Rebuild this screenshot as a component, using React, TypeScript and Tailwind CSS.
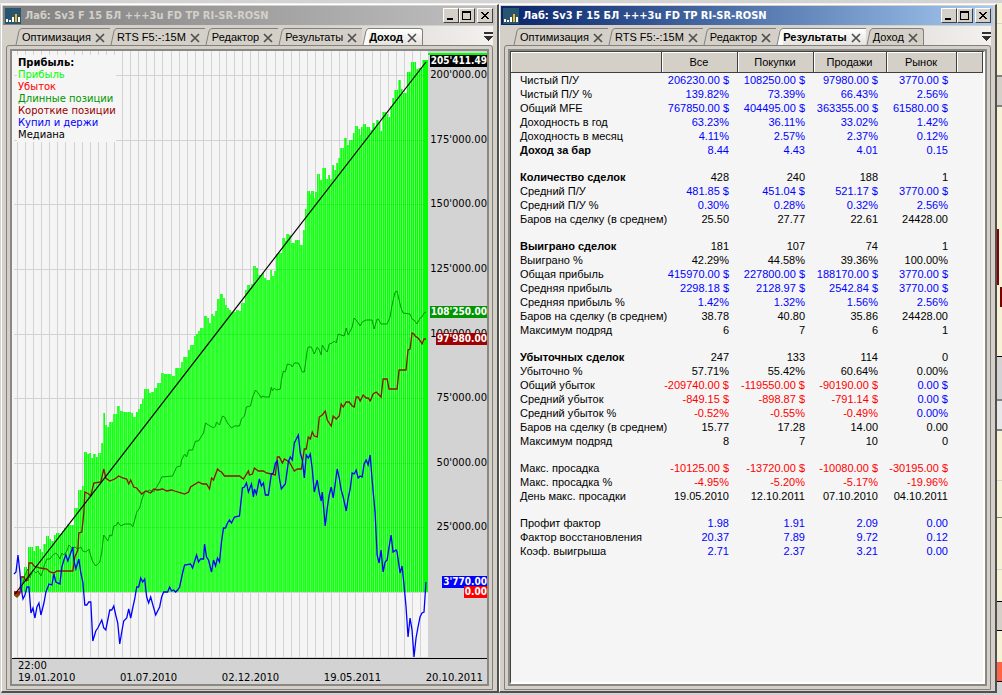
import { useState } from "react";
import { clsx } from "clsx";

const TABS = ["Оптимизация", "RTS F5:-:15M", "Редактор", "Результаты", "Доход"];

const ACCOUNT_TITLE = "Лаб: Sv3 F 15 БЛ +++3u FD TP RI-SR-ROSN";

const LEGEND = [
    { label: "Прибыль", color: "text-[#00ff00]" },
    { label: "Убыток", color: "text-[#ff0000]" },
    { label: "Длинные позиции", color: "text-[#009600]" },
    { label: "Короткие позиции", color: "text-[#960000]" },
    { label: "Купил и держи", color: "text-[#0000ff]" },
    { label: "Медиана", color: "text-black" },
];

const SCALE = [200000, 175000, 150000, 125000, 100000, 75000, 50000, 25000];

const MARKERS = [
    { value: 205411.49, label: "205'411.49", color: "bg-black" },
    { value: 108250, label: "108'250.00", color: "bg-[#009600]" },
    { value: 97980, label: "97'980.00", color: "bg-[#a00000]" },
    { value: 3770, label: "3'770.00", color: "bg-[#0000ff]" },
    { value: 0, label: "0.00", color: "bg-[#ff0000]" },
];

const DATES = ["19.01.2010", "01.07.2010", "02.12.2010", "19.05.2011", "20.10.2011"];

// Plot box: money runs along y, ZERO_Y is the zero level
const PLOT = { x: 12, y: 51, width: 417, height: 607 };
const ZERO_Y = 592;
const toY = (value: number) => ZERO_Y - value * 0.002585;
const toPercent = (value: number) => `${((toY(value) - PLOT.y) / PLOT.height) * 100}%`;

// Left edge and top of every group of equity bars
const EQUITY =
    "21,576 24,567 27,572 28,547 33,551 35,546 39,549 41,552 43,544 46,536 49,539 51,541 54,535 56,533 60,534 62,531 64,528 67,524 69,525 74,508 78,490 82,486 84,452 87,454 89,453 91,458 93,454 96,457 98,453 101,443 103,413 105,425 107,427 109,422 113,414 117,406 120,411 123,412 131,413 133,417 136,412 138,409 140,404 142,399 144,389 149,393 151,392 154,388 157,383 161,373 164,374 172,376 175,368 181,362 183,357 188,350 190,345 194,336 196,334 198,331 200,328 204,316 207,318 209,323 211,314 213,316 215,311 217,299 220,305 221,294 224,298 226,305 228,308 230,310 232,312 237,310 240,311 242,303 246,290 248,285 251,288 252,284 254,266 257,268 259,275 263,273 265,278 267,280 271,270 273,276 275,271 277,254 279,253 283,238 286,241 287,234 290,235 292,243 296,240 301,245 304,230 306,209 308,191 311,194 312,191 315,198 316,192 318,174 321,180 323,168 327,179 329,175 331,179 333,165 335,170 337,163 339,158 341,148 345,138 348,145 350,140 354,133 356,126 359,129 361,135 362,127 364,124 367,127 371,130 373,123 376,128 377,120 380,122 381,131 383,112 387,114 389,117 391,106 393,98 395,90 399,80 402,89 404,93 408,72 412,62 417,69 419,68 423,60";

const LONG =
    "14,595 17,597 20,592 22,587 25,575 28,569 30,578 33,570 36,573 38,571 41,576 43,571 44,566 47,559 50,559 53,555 56,553 58,555 60,559 62,553 64,555 67,551 69,545 72,548 75,547 78,549 81,547 83,551 86,552 89,549 91,556 93,562 96,566 100,562 102,552 104,535 106,538 108,541 110,535 112,536 114,526 117,525 118,522 121,526 125,524 131,524 133,527 135,520 137,512 140,508 142,500 145,492 150,490 154,492 157,487 160,482 162,477 173,476 177,467 181,466 182,460 185,454 187,457 189,450 193,450 196,441 199,441 202,436 204,433 206,423 209,425 214,428 216,426 217,422 220,425 223,416 225,417 228,423 232,428 235,426 240,426 242,419 245,416 247,407 251,406 253,398 256,390 258,392 262,398 263,396 266,397 270,397 272,387 273,391 275,388 277,390 281,389 282,380 284,371 286,372 288,364 292,365 293,367 295,363 299,363 301,367 303,372 305,372 308,350 309,347 312,347 315,354 318,347 320,350 322,355 323,345 326,350 328,352 330,344 333,343 335,341 337,343 339,334 345,336 347,328 349,335 353,327 355,318 357,320 361,326 363,322 367,320 373,320 375,329 378,319 379,319 382,324 388,324 391,317 393,305 396,292 398,291 400,300 402,308 404,313 411,314 413,319 415,320 418,324 421,318 423,317 425,313 427,312";

const SHORT =
    "14,593 20,593 21,577 24,577 26,581 28,580 29,563 32,563 34,566 37,567 40,568 47,569 50,572 54,573 57,571 73,571 75,557 78,550 79,533 82,532 84,513 85,492 89,494 91,496 94,483 101,482 104,469 106,478 110,481 115,479 119,476 123,478 127,479 129,484 131,480 134,487 137,488 142,494 146,491 151,493 154,489 158,490 163,489 167,491 172,490 175,491 182,493 185,494 189,492 191,487 199,482 203,484 207,484 210,489 212,478 214,480 218,469 220,471 222,472 225,476 240,476 244,479 249,471 250,475 253,474 255,468 259,471 264,471 267,473 272,474 276,475 278,457 280,457 283,463 285,459 290,462 295,471 298,469 302,469 303,463 305,449 307,449 309,437 311,439 313,432 315,436 318,437 320,417 323,415 326,411 328,420 332,426 334,416 337,419 340,416 342,404 344,407 347,402 350,402 353,406 355,407 357,397 359,397 361,401 364,395 367,398 369,398 371,401 374,394 377,392 379,394 382,397 384,379 388,379 390,389 398,389 400,370 407,370 409,350 411,349 413,333 415,334 416,336 419,338 422,342 423,344 425,339 427,339";

const HOLD =
    "14,574 16,572 18,555 20,573 21,587 23,599 25,595 27,587 29,587 31,613 33,608 35,618 37,607 39,603 41,615 44,603 46,592 48,587 49,584 52,585 54,574 56,582 60,584 62,567 64,560 66,555 68,561 73,547 74,560 76,569 79,559 81,573 83,582 85,605 87,605 89,602 91,602 93,641 96,631 98,628 102,620 104,628 106,630 110,610 112,610 114,606 116,615 118,623 120,644 122,632 124,621 127,618 129,609 131,618 133,608 135,599 137,587 139,587 141,578 143,582 145,579 147,597 149,603 151,597 156,615 160,607 162,597 164,592 168,592 170,587 172,591 174,590 176,592 178,590 180,587 183,573 185,565 191,564 193,568 197,555 199,562 201,559 204,559 205,544 207,557 209,560 212,572 214,560 216,566 218,558 220,562 222,542 224,528 226,528 228,523 230,520 232,523 235,517 240,516 243,488 245,487 247,483 249,492 252,484 254,497 255,489 257,494 260,479 262,486 264,483 266,495 269,495 272,474 274,473 276,463 278,461 280,478 282,489 285,485 286,484 289,462 291,457 293,460 295,443 297,439 299,435 301,453 303,460 305,478 307,455 309,458 311,454 313,469 315,492 318,480 320,493 322,501 323,492 326,526 328,508 330,495 332,487 334,498 338,469 340,478 342,490 344,497 347,511 349,498 351,489 353,473 355,474 357,470 359,478 361,476 363,477 365,464 367,460 369,465 371,455 373,480 376,513 378,555 380,563 382,550 384,572 386,562 388,560 390,547 392,535 394,552 397,550 398,552 401,573 403,566 405,585 407,607 409,637 411,618 413,630 415,657 417,638 419,627 421,617 423,613 425,612 426,597 427,582";

const equityPath =
    "M21 592" +
    EQUITY.split(" ")
        .map((point) => {
            const [x, y] = point.split(",");
            return `H${x}V${y}`;
        })
        .join("") +
    "H429V592Z";

type Tone = "blue" | "red" | "black";
type Row = { label: string; values: string[]; tone?: Tone; bold?: boolean };

// null is an empty line between groups
const ROWS: (Row | null)[] = [
    { label: "Чистый П/У", values: ["206230.00 $", "108250.00 $", "97980.00 $", "3770.00 $"], tone: "blue" },
    { label: "Чистый П/У %", values: ["139.82%", "73.39%", "66.43%", "2.56%"], tone: "blue" },
    { label: "Общий MFE", values: ["767850.00 $", "404495.00 $", "363355.00 $", "61580.00 $"], tone: "blue" },
    { label: "Доходность в год", values: ["63.23%", "36.11%", "33.02%", "1.42%"], tone: "blue" },
    { label: "Доходность в месяц", values: ["4.11%", "2.57%", "2.37%", "0.12%"], tone: "blue" },
    { label: "Доход за бар", values: ["8.44", "4.43", "4.01", "0.15"], tone: "blue", bold: true },
    null,
    { label: "Количество сделок", values: ["428", "240", "188", "1"], bold: true },
    { label: "Средний П/У", values: ["481.85 $", "451.04 $", "521.17 $", "3770.00 $"], tone: "blue" },
    { label: "Средний П/У %", values: ["0.30%", "0.28%", "0.32%", "2.56%"], tone: "blue" },
    { label: "Баров на сделку (в среднем)", values: ["25.50", "27.77", "22.61", "24428.00"] },
    null,
    { label: "Выиграно сделок", values: ["181", "107", "74", "1"], bold: true },
    { label: "Выиграно %", values: ["42.29%", "44.58%", "39.36%", "100.00%"] },
    { label: "Общая прибыль", values: ["415970.00 $", "227800.00 $", "188170.00 $", "3770.00 $"], tone: "blue" },
    { label: "Средняя прибыль", values: ["2298.18 $", "2128.97 $", "2542.84 $", "3770.00 $"], tone: "blue" },
    { label: "Средняя прибыль %", values: ["1.42%", "1.32%", "1.56%", "2.56%"], tone: "blue" },
    { label: "Баров на сделку (в среднем)", values: ["38.78", "40.80", "35.86", "24428.00"] },
    { label: "Максимум подряд", values: ["6", "7", "6", "1"] },
    null,
    { label: "Убыточных сделок", values: ["247", "133", "114", "0"], bold: true },
    { label: "Убыточно %", values: ["57.71%", "55.42%", "60.64%", "0.00%"] },
    { label: "Общий убыток", values: ["-209740.00 $", "-119550.00 $", "-90190.00 $", "0.00 $"], tone: "red" },
    { label: "Средний убыток", values: ["-849.15 $", "-898.87 $", "-791.14 $", "0.00 $"], tone: "red" },
    { label: "Средний убыток %", values: ["-0.52%", "-0.55%", "-0.49%", "0.00%"], tone: "red" },
    { label: "Баров на сделку (в среднем)", values: ["15.77", "17.28", "14.00", "0.00"] },
    { label: "Максимум подряд", values: ["8", "7", "10", "0"] },
    null,
    { label: "Макс. просадка", values: ["-10125.00 $", "-13720.00 $", "-10080.00 $", "-30195.00 $"], tone: "red" },
    { label: "Макс. просадка %", values: ["-4.95%", "-5.20%", "-5.17%", "-19.96%"], tone: "red" },
    { label: "День макс. просадки", values: ["19.05.2010", "12.10.2011", "07.10.2010", "04.10.2011"] },
    null,
    { label: "Профит фактор", values: ["1.98", "1.91", "2.09", "0.00"], tone: "blue" },
    { label: "Фактор восстановления", values: ["20.37", "7.89", "9.72", "0.12"], tone: "blue" },
    { label: "Коэф. выигрыша", values: ["2.71", "2.37", "3.21", "0.00"], tone: "blue" },
];

function toneClass(tone: Tone | undefined, value: string) {
    if (tone === "red") return value.startsWith("-") ? "text-[#ff0000]" : "text-[#0000ff]";
    return tone === "blue" ? "text-[#0000ff]" : "text-black";
}

function TitleButton({ label, path, className }: { label: string; path: string; className?: string }) {
    return (
        <button
            type="button"
            aria-label={label}
            className={clsx(
                "flex h-[15px] w-4 items-center justify-center border border-t-white border-l-white border-r-[#404040] border-b-[#404040] bg-[#d4d0c8]",
                className
            )}
        >
            <svg width="12" height="11" viewBox="0 0 12 11" shapeRendering="crispEdges">
                <path d={path} fill="black" />
            </svg>
        </button>
    );
}

function TitleBar({ active }: { active?: boolean }) {
    return (
        <header
            className={clsx(
                "flex h-[19px] shrink-0 items-center bg-linear-to-r pr-[2px] pl-[2px]",
                active ? "from-[#0a246a] to-[#a6caf0]" : "from-[#808080] to-[#c0c0c0]"
            )}
        >
            <svg width="16" height="16" viewBox="0 0 16 16" shapeRendering="crispEdges" className="shrink-0">
                <rect width="16" height="16" fill="#27546f" />
                <path d="M1 11h2v3h-2zM4 12h2v2h-2zM7 9h2v5h-2zM13 9h2v5h-2z" fill="white" />
                <path d="M10 6h2v8h-2z" fill="#f5b91e" />
            </svg>
            <h1
                className={clsx(
                    "ml-1 min-w-0 flex-1 truncate font-['DejaVu_Sans_Condensed','DejaVu_Sans',sans-serif] text-[11px] leading-4 font-bold",
                    active ? "text-white" : "text-[#d4d0c8]"
                )}
            >
                {ACCOUNT_TITLE}
            </h1>
            <TitleButton label="Свернуть" path="M2 8h6v2H2z" />
            <TitleButton label="Развернуть" path="M1 1h9v9H1zM2 3v6h7V3z" />
            <TitleButton
                label="Закрыть"
                className="ml-[2px]"
                path="M2 2h2v1h1v1h2V3h1V2h2v1H9v1H8v1H7v1h1v1h1v1h1v1H8V8H7V7H5v1H4v1H2V8h1V7h1V6h1V5H4V4H3V3H2z"
            />
        </header>
    );
}

function TabStrip({ selected, onSelect }: { selected: string; onSelect: (tab: string) => void }) {
    return (
        <div className="flex h-[19px] items-end bg-linear-to-r from-[#d4d0c8] from-60% to-[#f2f1ef] pl-[9px]">
            {TABS.map((tab, i) => {
                const current = tab === selected;
                return (
                    <div key={tab} className="flex h-[17px]">
                        <svg width="7" height="17" viewBox="0 0 7 17" className="shrink-0">
                            <path d="M1 17L4 3Q5 0.5 7 0.5V17Z" fill={current ? "#fafafa" : "#d4d0c8"} />
                            <path d="M1 17L4 3Q5 0.5 7 0.5" fill="none" stroke="#808080" />
                        </svg>
                        <div
                            className={clsx(
                                "flex items-center border-t border-[#808080]",
                                current ? "bg-linear-to-b from-white to-[#e4e2dd]" : "bg-[#d4d0c8]",
                                i === TABS.length - 1 && "rounded-tr-[3px] border-r"
                            )}
                        >
                            <button
                                type="button"
                                onClick={() => onSelect(tab)}
                                className={clsx("text-[11px] leading-4 whitespace-nowrap", current && "font-bold")}
                            >
                                {tab}
                            </button>
                            <button type="button" aria-label={`Закрыть ${tab}`} className="mr-[5px] ml-1 pt-[2px]">
                                <svg width="10" height="10" viewBox="0 0 10 10">
                                    <path d="M1 1L9 9M9 1L1 9" stroke="#505050" strokeWidth="1.7" />
                                </svg>
                            </button>
                        </div>
                    </div>
                );
            })}
            <button type="button" aria-label="Список вкладок" className="mb-[4px] ml-auto">
                <svg width="9" height="9" viewBox="0 0 9 9" shapeRendering="crispEdges">
                    <path d="M0 0h9v2H0zM0 4h9v1H8v1H7v1H6v1H5v1H4V8H3V7H2V6H1V5H0z" fill="#303030" />
                </svg>
            </button>
        </div>
    );
}

function LabWindow({ active, initialTab, children }: { active?: boolean; initialTab: string; children: React.ReactNode }) {
    const [tab, setTab] = useState(initialTab);

    return (
        <section className="flex min-w-0 flex-1 flex-col border-t border-r-2 border-b-2 border-l border-t-white border-r-[#505050] border-b-[#505050] border-l-white bg-[#d4d0c8] pt-px pr-[2px] pl-px">
            <TitleBar active={active} />
            <div className="flex flex-1 flex-col pt-px pr-[2px] pb-px pl-[3px]">
                <TabStrip selected={tab} onSelect={setTab} />
                <div className="flex flex-1 flex-col rounded-t-[3px] border border-[#808080] p-[3px]">
                    <div className="flex flex-1 flex-col border-2 border-[#8a8884]">{children}</div>
                </div>
            </div>
        </section>
    );
}

function ProfitChart() {
    return (
        <div className="flex flex-1 flex-col bg-[#d3d3d3] font-['DejaVu_Sans',sans-serif] text-[10px] leading-3 text-black">
            <div className="relative flex flex-1 border-b border-black">
                <div className="relative min-w-0 flex-1 bg-[#f5f5f5]">
                    <svg
                        className="absolute inset-0 h-full w-full"
                        viewBox={`${PLOT.x} ${PLOT.y} ${PLOT.width} ${PLOT.height}`}
                        preserveAspectRatio="none"
                    >
                        <defs>
                            <pattern id="bars" width="4" height="8" patternUnits="userSpaceOnUse">
                                <rect width="4" height="8" fill="#00ff00" />
                                <rect x="1" width="1" height="8" fill="#50ff50" />
                                <rect x="3" width="1" height="8" fill="#78ff78" />
                            </pattern>
                            <clipPath id="equity">
                                <path d={equityPath} />
                            </clipPath>
                        </defs>
                        <g fill="#d3d3d3" shapeRendering="crispEdges">
                            {Array.from({ length: 51 }, (_, i) => (
                                <rect key={i} x={Math.round(17 + i * 8.08)} y="51" width="1" height="607" />
                            ))}
                            {[...SCALE, 0, -25000].map((value) => (
                                <rect key={value} x="14" y={Math.round(toY(value))} width="415" height="1" />
                            ))}
                        </g>
                        <path d={equityPath} fill="url(#bars)" shapeRendering="crispEdges" />
                        <path d="M425 60h4v532h-4z" fill="#00ff00" shapeRendering="crispEdges" />
                        <g clipPath="url(#equity)" fill="#00d000" fillOpacity="0.25" shapeRendering="crispEdges">
                            {SCALE.map((value) => (
                                <rect key={value} x="14" y={Math.round(toY(value))} width="411" height="1" />
                            ))}
                        </g>
                        <path d="M14 591h6v4l-3 3l-3-3z" fill="#d81818" />
                        <g fill="none" strokeWidth="1">
                            <polyline points={LONG} stroke="#009600" />
                            <polyline points={SHORT} stroke="#8c1400" strokeWidth="1.3" />
                            <path d="M15 594L427 62" stroke="black" strokeWidth="1.2" />
                            <polyline points={HOLD} stroke="#0000ff" strokeWidth="1.3" />
                        </g>
                    </svg>
                    <div className="absolute top-1 left-[5px] bg-[#f5f5f5] pt-[2px] pb-[1px] pl-px">
                        <p className="font-bold">Прибыль:</p>
                        <ul>
                            {LEGEND.map(({ label, color }) => (
                                <li key={label} className={color}>
                                    {label}
                                </li>
                            ))}
                        </ul>
                    </div>
                </div>
                <div className="relative w-[59px] shrink-0">
                    <div className="h-1 border-b-2 border-[#00ff00]" />
                    {SCALE.map((value) => (
                        <span key={value} className="absolute right-0 -translate-y-1/2" style={{ top: toPercent(value) }}>
                            {`${value / 1000}'000.00`}
                        </span>
                    ))}
                    {MARKERS.map(({ value, label, color }) => (
                        <span
                            key={label}
                            className={clsx(
                                "absolute right-0 -translate-y-1/2 pl-px font-['DejaVu_Sans_Condensed','DejaVu_Sans',sans-serif] font-bold text-white",
                                color
                            )}
                            style={{ top: toPercent(value) }}
                        >
                            {label}
                        </span>
                    ))}
                </div>
            </div>
            <div className="pt-px pr-1 pl-[6px]">
                <p>22:00</p>
                <div className="flex justify-between">
                    {DATES.map((date) => (
                        <time key={date}>{date}</time>
                    ))}
                </div>
            </div>
        </div>
    );
}

function ResultsTable() {
    return (
        <div className="flex-1 border-t border-r-2 border-b-2 border-l border-t-[#404040] border-r-white border-b-white border-l-[#404040] bg-[#f5f5f5]">
            <table className="w-full table-fixed border-collapse text-[11px] leading-[14px]">
                <colgroup>
                    <col className="w-[150px]" />
                    <col className="w-[76px]" />
                    <col className="w-[76px]" />
                    <col className="w-[73px]" />
                    <col className="w-[70px]" />
                    <col />
                </colgroup>
                <thead>
                    <tr className="h-5">
                        {["", "Все", "Покупки", "Продажи", "Рынок", ""].map((name, i) => (
                            <th
                                key={i}
                                scope="col"
                                className="border-r border-b border-[#404040] bg-[#d4d0c8] p-0 font-normal shadow-[inset_1px_1px_0_#ffffff]"
                            >
                                {name}
                            </th>
                        ))}
                    </tr>
                </thead>
                <tbody>
                    {ROWS.map((row, i) =>
                        row ? (
                            <tr key={i} className="h-[14px]">
                                <th
                                    scope="row"
                                    className={clsx("p-0 pl-[9px] text-left whitespace-nowrap", row.bold ? "font-bold" : "font-normal")}
                                >
                                    {row.label}
                                </th>
                                {row.values.map((value, j) => (
                                    <td key={j} className={clsx("p-0 pr-2 text-right whitespace-nowrap", toneClass(row.tone, value))}>
                                        {value}
                                    </td>
                                ))}
                                <td />
                            </tr>
                        ) : (
                            <tr key={i} className="h-[13px]" aria-hidden="true">
                                <td colSpan={6} className="p-0" />
                            </tr>
                        )
                    )}
                </tbody>
            </table>
        </div>
    );
}

// Sliver of the workspace that shows past the right window
function WorkspaceEdge() {
    return (
        <div className="flex w-[5px] shrink-0 flex-col overflow-hidden bg-[#f5f2d5]">
            <div className="h-5 border-b border-[#d3d3d3]" />
            <div className="h-[51px]" />
            <div className="h-8 border-y-2 border-[#808080] bg-[#d4d0c8]" />
            <div className="h-[122px]" />
            <div className="h-[56px] w-[2px] bg-[#800000]" />
            <div className="mt-[2px] h-5 w-[2px] self-end bg-[#800000]" />
            <div className="h-[50px] border-b border-black" />
            <div className="h-11 border-b-2 border-[#808080] bg-[#d3d3d3]" />
            <div className="h-[30px] border-b-2 border-[#808080] bg-[#e8e8e8]" />
            <div className="h-[50px] border-b border-[#d3d3d3]" />
            <div className="h-[37px] border-b border-[#808080]" />
            <div className="h-[52px] border-b border-[#d3d3d3]" />
            <div className="h-[32px] border-b border-black" />
            <div className="h-[29px] border-b border-black bg-[#d4d0c8]" />
            <div className="h-[31px]" />
            <div className="h-5 border-b border-black bg-[#ff6347]" />
            <div className="flex-1 bg-[#d3d3d3]" />
        </div>
    );
}

export default function App() {
    return (
        <main className="flex min-h-screen flex-col bg-[#d3d3d3] font-['Liberation_Sans',Arial,sans-serif] text-black">
            <div className="h-1 border-b border-[#f0f0f0]" />
            <div className="flex flex-1 pl-px">
                <LabWindow initialTab="Доход">
                    <ProfitChart />
                </LabWindow>
                <LabWindow active initialTab="Результаты">
                    <ResultsTable />
                </LabWindow>
                <WorkspaceEdge />
            </div>
            <div className="h-[2px]" />
        </main>
    );
}
